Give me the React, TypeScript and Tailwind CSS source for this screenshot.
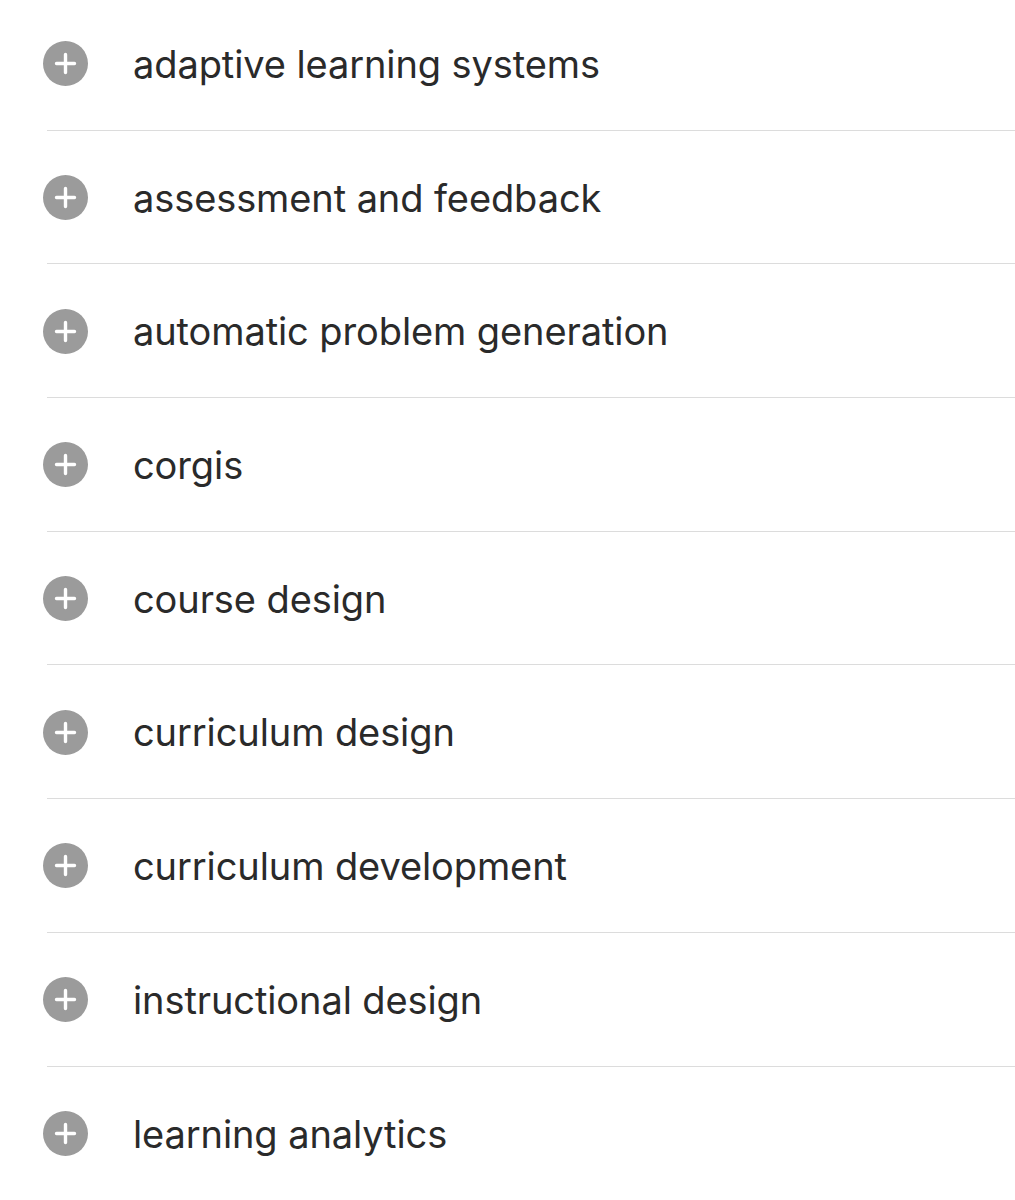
import React from "react";

const topics = [
	"adaptive learning systems",
	"assessment and feedback",
	"automatic problem generation",
	"corgis",
	"course design",
	"curriculum design",
	"curriculum development",
	"instructional design",
	"learning analytics",
];

function AddIcon() {
	return (
		<svg width="45" height="45" viewBox="0 0 45 45" className="shrink-0">
			<circle cx="22.5" cy="22.5" r="22.5" fill="#9b9b9b"/>
			<path d="M22.5 13.5v18M13.5 22.5h18" stroke="#fff" strokeWidth="3.4" strokeLinecap="round"/>
		</svg>
	);
}

export default function App() {
	return (
		<div className="min-h-[1200px] w-full overflow-hidden bg-white font-['Inter',sans-serif]">
			<ul className="-mt-[3px] ml-[47px]">
				{topics.map((topic) => (
					<li key={topic} className="flex h-[133.7px] items-center border-b-[1.5px] border-[#dcdcdc] pt-[1px] last:border-b-0">
						<div className="-ml-[4px] flex w-[90px] items-center">
							<AddIcon/>
						</div>
						<span className="text-[38px] leading-none tracking-[-0.1px] text-[#2a2a2a]">{topic}</span>
					</li>
				))}
			</ul>
		</div>
	);
}
